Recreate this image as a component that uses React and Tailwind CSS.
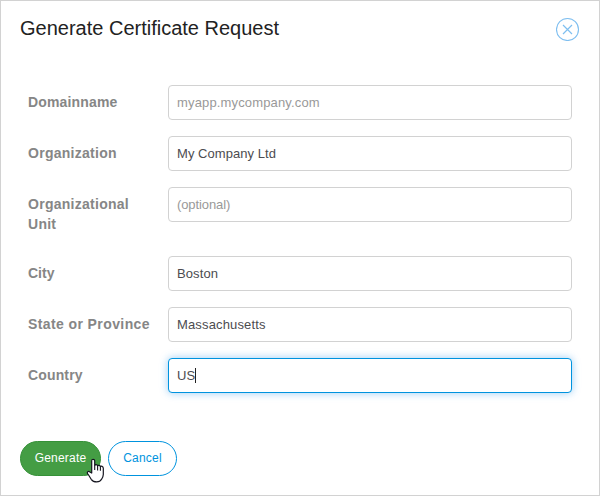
const fields = [
  { label: 'Domainname', placeholder: 'myapp.mycompany.com', labelSpacing: 'tracking-[0.16px]', spacing: 'tracking-[0.15px]' },
  { label: 'Organization', value: 'My Company Ltd', labelSpacing: 'tracking-[0.27px]', spacing: 'tracking-[0.05px]' },
  { label: 'Organizational Unit', placeholder: '(optional)', labelSpacing: 'tracking-[0.27px]', spacing: 'tracking-[-0.1px]' },
  { label: 'City', value: 'Boston', labelSpacing: 'tracking-[0px]', spacing: 'tracking-[0.1px]' },
  { label: 'State or Province', value: 'Massachusetts', labelSpacing: 'tracking-[0.4px]', spacing: 'tracking-[0.15px]' },
  { label: 'Country', value: 'US', focused: true, labelSpacing: 'tracking-[0.15px]', spacing: 'tracking-[0.1px]' },
];

function Field({ label, placeholder, value, focused, labelSpacing, spacing }) {
  const border = focused
    ? 'border-[#0093de] shadow-[0_0_8px_rgba(0,130,230,0.4)]'
    : 'border-[#d2d2d2]';
  return (
    <div className="flex items-start">
      <div className={`w-[140px] shrink-0 pt-[7px] pr-3 pb-[6px] text-sm leading-5 font-bold text-[#868686] ${labelSpacing}`}>
        {label}
      </div>
      <div className={`flex h-[35px] w-[404px] items-center rounded-[4px] border bg-white px-2 text-[13px] leading-5 ${border}`}>
        <span className={`${value ? 'text-[#4c4c50]' : 'text-[#999]'} ${spacing}`}>{value || placeholder}</span>
        {focused && <span className="h-[15px] w-px bg-[#222]" />}
      </div>
    </div>
  );
}

function CloseIcon() {
  return (
    <svg className="-mr-px mt-[16px] h-6 w-6" viewBox="0 0 24 24" fill="none" stroke="#7fbff0">
      <circle cx="11.500" cy="12.500" r="11" strokeWidth="1.100" />
      <path d="M7 8l9 9M16 8l-9 9" strokeWidth="1.200" />
    </svg>
  );
}

function HandCursor() {
  return (
    <svg className="absolute top-[17px] left-[66px] h-[25px] w-[19px]" viewBox="0 0 19 25">
      <path
        d="M5.700 15V2.800c0-2 3-2 3 0v4.700c.3-1.200 2.600-1.200 2.900.4.500-.9 2.500-.7 2.800.8.600-.9 2.900-.5 2.900 1.500v6.300c0 2-.8 3.300-1.800 4.800-.8 1.600-2.400 2.600-4.800 2.600-2.500 0-4.300-.9-5.500-2.600-1.200-1.900-1.900-3.600-3.300-5.200-1.500-1.700.3-3.300 2-2.200z"
        fill="#fff"
        stroke="#15151f"
        strokeWidth="1.200"
        strokeLinejoin="round"
      />
      <path d="M8.700 7.500v4.500M11.600 8v4.500M14.400 8.700v4" stroke="#15151f" strokeWidth="1.100" fill="none" />
    </svg>
  );
}

export default function App() {
  return (
    <main className="flex h-[496px] w-[600px] flex-col border border-[#d2d2d2] bg-white font-['Liberation_Sans',Arial,sans-serif]">
      <header className="flex h-[84px] shrink-0 items-start justify-between pr-5 pl-[19px]">
        <h1 className="pt-[14px] text-[20px] leading-[26px] text-[#222]">Generate Certificate Request</h1>
        <CloseIcon />
      </header>
      <section className="flex flex-col gap-4 pl-[27px]">
        {fields.map((field) => (
          <Field key={field.label} {...field} />
        ))}
      </section>
      <footer className="mt-12 flex gap-[7px] pl-[19px] text-xs">
        <div className="relative">
          <button className="flex h-[35px] w-[81px] items-center justify-center rounded-full border border-[#359138] bg-[#449d44] pb-px tracking-[0.2px] text-white">
            Generate
          </button>
          <HandCursor />
        </div>
        <button className="flex h-[35px] w-[69px] items-center justify-center rounded-full border border-[#0093de] bg-white pb-px tracking-[0.2px] text-[#0093de]">
          Cancel
        </button>
      </footer>
    </main>
  );
}
